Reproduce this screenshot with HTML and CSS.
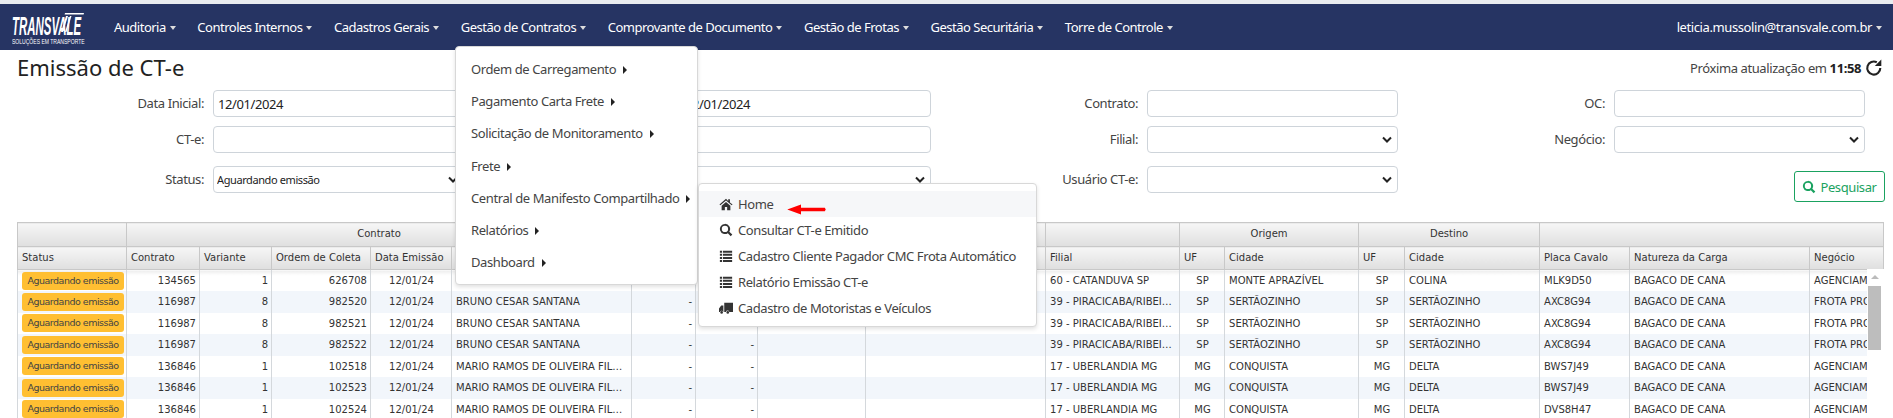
FILE: index.html
```html
<!DOCTYPE html>
<html lang="pt-BR">
<head>
	<meta charset="UTF-8">
	<title>Emissão de CT-e</title>
	<link rel="stylesheet" href="styles.css">
</head>
<body>
	<div id="navbar">
		<div id="logo">
			<div class="logo-name">TRANSVALE</div>
			<div class="logo-sub">SOLUÇÕES EM TRANSPORTE</div>
			<svg id="logo-road" viewBox="0 0 26 22"><path d="M7 1h19l-.4 1.500H6.600zM8 4l2 0-5 16-2 0zM12 4l1.500 0-5 16-1.500 0z" fill="#fff"/></svg>
		</div>
		<ul id="nav">
			<li>Auditoria<i class="caret"></i></li>
			<li>Controles Internos<i class="caret"></i></li>
			<li>Cadastros Gerais<i class="caret"></i></li>
			<li>Gestão de Contratos<i class="caret"></i></li>
			<li>Comprovante de Documento<i class="caret"></i></li>
			<li>Gestão de Frotas<i class="caret"></i></li>
			<li>Gestão Securitária<i class="caret"></i></li>
			<li>Torre de Controle<i class="caret"></i></li>
		</ul>
		<div id="user">leticia.mussolin@transvale.com.br<i class="caret"></i></div>
	</div>

	<div id="menu">
		<div class="menu-item">Ordem de Carregamento<i class="arrow-right"></i></div>
		<div class="menu-item">Pagamento Carta Frete<i class="arrow-right"></i></div>
		<div class="menu-item">Solicitação de Monitoramento<i class="arrow-right"></i></div>
		<div class="menu-item">Frete<i class="arrow-right"></i></div>
		<div class="menu-item">Central de Manifesto Compartilhado<i class="arrow-right"></i></div>
		<div class="menu-item">Relatórios<i class="arrow-right"></i></div>
		<div class="menu-item">Dashboard<i class="arrow-right"></i></div>
	</div>

	<div id="submenu">
		<div class="sub-item selected">
			<svg class="ico" viewBox="0 0 16 16"><path d="M8 2 0.500 8.500l1 1L8 4l6.500 5.500 1-1L12.500 6.300V2.500h-2v2.100zM3 10v5h3.700v-3.500h2.600V15H13v-5L8 5.800z"/></svg>
			Home
			<svg id="red-arrow" viewBox="0 0 44 12"><path d="M1 6 16 0.500V4h26q2 2 0 4H16v3.500z"/></svg>
		</div>
		<div class="sub-item">
			<svg class="ico" viewBox="0 0 16 16"><path d="M6.800 1a5.800 5.800 0 1 0 3.300 10.600l3.300 3.400 1.800-1.800-3.400-3.300A5.800 5.800 0 0 0 6.800 1zm0 2.200a3.600 3.600 0 1 1 0 7.200 3.600 3.600 0 0 1 0-7.200z"/></svg>
			Consultar CT-e Emitido
		</div>
		<div class="sub-item">
			<svg class="ico" viewBox="0 0 16 16"><path d="M1 2h2.500v2.300H1zM4.500 2H15v2.300H4.500zM1 5.500h2.500v2.300H1zM4.500 5.500H15v2.300H4.500zM1 9h2.500v2.300H1zM4.500 9H15v2.300H4.500zM1 12.500h2.500v2.300H1zM4.500 12.500H15v2.300H4.500z"/></svg>
			Cadastro Cliente Pagador CMC Frota Automático
		</div>
		<div class="sub-item">
			<svg class="ico" viewBox="0 0 16 16"><path d="M1 2h2.500v2.300H1zM4.500 2H15v2.300H4.500zM1 5.500h2.500v2.300H1zM4.500 5.500H15v2.300H4.500zM1 9h2.500v2.300H1zM4.500 9H15v2.300H4.500zM1 12.500h2.500v2.300H1zM4.500 12.500H15v2.300H4.500z"/></svg>
			Relatório Emissão CT-e
		</div>
		<div class="sub-item">
			<svg class="ico" viewBox="0 0 16 16"><path d="M6 2h10v10.500h-4.200a2 2 0 0 0-3.900 0H6zM5 5v7.500H4.800a2 2 0 0 0-3.700 0H0V8.500L2.500 5z"/><circle cx="3" cy="13" r="1.500"/><circle cx="10" cy="13" r="1.500"/></svg>
			Cadastro de Motoristas e Veículos
		</div>
	</div>

	<div id="title-row">
		<h1>Emissão de CT-e</h1>
		<div id="refresh">
			<span>Próxima atualização em <b>11:58</b></span>
			<svg viewBox="0 0 16 16"><path d="M13.600 8A5.800 5.800 0 1 1 10.500 2.900" fill="none" stroke="#222" stroke-width="1.900"/><path d="M14.500 0.500v5.800H8.700z" fill="#222"/></svg>
		</div>
	</div>

	<div id="filters">
		<div class="field row-one"><label>Data Inicial:</label><input class="date" type="text" value="12/01/2024"></div>
		<div class="field row-one"><label>Data Final:</label><input class="date" type="text" value="12/01/2024"></div>
		<div class="field"><label>Contrato:</label><input type="text"></div>
		<div class="field"><label>OC:</label><input type="text"></div>

		<div class="field"><label>CT-e:</label><input type="text"></div>
		<div class="field"><label>Motorista:</label><input type="text"></div>
		<div class="field"><label>Filial:</label><select></select></div>
		<div class="field"><label>Negócio:</label><select></select></div>

		<div class="field"><label>Status:</label><select class="small"><option>Aguardando emissão</option></select></div>
		<div class="field"><label>Tipo:</label><select></select></div>
		<div class="field"><label>Usuário CT-e:</label><select></select></div>
		<div class="field field-btn">
			<button id="search">
				<svg viewBox="0 0 16 16"><path d="M6.800 1a5.800 5.800 0 1 0 3.300 10.600l3.300 3.400 1.800-1.800-3.400-3.300A5.800 5.800 0 0 0 6.800 1zm0 2.200a3.600 3.600 0 1 1 0 7.200 3.600 3.600 0 0 1 0-7.200z"/></svg>
				Pesquisar
			</button>
		</div>
	</div>

	<div id="grid">
		<table>
			<colgroup>
				<col class="c109"><col class="c73"><col class="c72"><col class="c99"><col class="c81"><col class="c180"><col class="c64"><col class="c62"><col class="c108"><col class="c180"><col class="c134"><col class="c45"><col class="c134"><col class="c46"><col class="c135"><col class="c90"><col class="c180"><col class="c74">
			</colgroup>
			<thead>
				<tr class="group">
					<th></th>
					<th colspan="5">Contrato</th>
					<th colspan="4"></th>
					<th></th>
					<th colspan="2">Origem</th>
					<th colspan="2">Destino</th>
					<th colspan="3"></th>
				</tr>
				<tr class="cols">
					<th>Status</th><th>Contrato</th><th>Variante</th><th>Ordem de Coleta</th><th>Data Emissão</th><th>Motorista</th><th></th><th>Série</th><th></th><th></th><th>Filial</th><th>UF</th><th>Cidade</th><th>UF</th><th>Cidade</th><th>Placa Cavalo</th><th>Natureza da Carga</th><th>Negócio</th>
				</tr>
			</thead>
			<tbody>
				<tr>
					<td><span class="badge">Aguardando emissão</span></td><td class="r">134565</td><td class="r">1</td><td class="r">626708</td><td class="c">12/01/24</td><td class="name"></td><td class="r">-</td><td class="r">-</td><td></td><td></td><td>60 - CATANDUVA SP</td><td class="c">SP</td><td>MONTE APRAZÍVEL</td><td class="c">SP</td><td>COLINA</td><td>MLK9D50</td><td>BAGACO DE CANA</td><td class="clip">AGENCIAMENTO</td>
				</tr>
				<tr class="odd">
					<td><span class="badge">Aguardando emissão</span></td><td class="r">116987</td><td class="r">8</td><td class="r">982520</td><td class="c">12/01/24</td><td class="name">BRUNO CESAR SANTANA</td><td class="r">-</td><td class="r">-</td><td></td><td></td><td>39 - PIRACICABA/RIBEIRÃO PRETO</td><td class="c">SP</td><td>SERTÃOZINHO</td><td class="c">SP</td><td>SERTÃOZINHO</td><td>AXC8G94</td><td>BAGACO DE CANA</td><td class="clip">FROTA PROPRIA</td>
				</tr>
				<tr>
					<td><span class="badge">Aguardando emissão</span></td><td class="r">116987</td><td class="r">8</td><td class="r">982521</td><td class="c">12/01/24</td><td class="name">BRUNO CESAR SANTANA</td><td class="r">-</td><td class="r">-</td><td></td><td></td><td>39 - PIRACICABA/RIBEIRÃO PRETO</td><td class="c">SP</td><td>SERTÃOZINHO</td><td class="c">SP</td><td>SERTÃOZINHO</td><td>AXC8G94</td><td>BAGACO DE CANA</td><td class="clip">FROTA PROPRIA</td>
				</tr>
				<tr class="odd">
					<td><span class="badge">Aguardando emissão</span></td><td class="r">116987</td><td class="r">8</td><td class="r">982522</td><td class="c">12/01/24</td><td class="name">BRUNO CESAR SANTANA</td><td class="r">-</td><td class="r">-</td><td></td><td></td><td>39 - PIRACICABA/RIBEIRÃO PRETO</td><td class="c">SP</td><td>SERTÃOZINHO</td><td class="c">SP</td><td>SERTÃOZINHO</td><td>AXC8G94</td><td>BAGACO DE CANA</td><td class="clip">FROTA PROPRIA</td>
				</tr>
				<tr>
					<td><span class="badge">Aguardando emissão</span></td><td class="r">136846</td><td class="r">1</td><td class="r">102518</td><td class="c">12/01/24</td><td class="name">MARIO RAMOS DE OLIVEIRA FILHO</td><td class="r">-</td><td class="r">-</td><td></td><td></td><td>17 - UBERLANDIA MG</td><td class="c">MG</td><td>CONQUISTA</td><td class="c">MG</td><td>DELTA</td><td>BWS7J49</td><td>BAGACO DE CANA</td><td class="clip">AGENCIAMENTO</td>
				</tr>
				<tr class="odd">
					<td><span class="badge">Aguardando emissão</span></td><td class="r">136846</td><td class="r">1</td><td class="r">102523</td><td class="c">12/01/24</td><td class="name">MARIO RAMOS DE OLIVEIRA FILHO</td><td class="r">-</td><td class="r">-</td><td></td><td></td><td>17 - UBERLANDIA MG</td><td class="c">MG</td><td>CONQUISTA</td><td class="c">MG</td><td>DELTA</td><td>BWS7J49</td><td>BAGACO DE CANA</td><td class="clip">AGENCIAMENTO</td>
				</tr>
				<tr>
					<td><span class="badge">Aguardando emissão</span></td><td class="r">136846</td><td class="r">1</td><td class="r">102524</td><td class="c">12/01/24</td><td class="name">MARIO RAMOS DE OLIVEIRA FILHO</td><td class="r">-</td><td class="r">-</td><td></td><td></td><td>17 - UBERLANDIA MG</td><td class="c">MG</td><td>CONQUISTA</td><td class="c">MG</td><td>DELTA</td><td>DVS8H47</td><td>BAGACO DE CANA</td><td class="clip">AGENCIAMENTO</td>
				</tr>
			</tbody>
		</table>
		<div id="scrollbar">
			<div id="scroll-up"></div>
			<div id="scroll-thumb"></div>
		</div>
	</div>
</body>
</html>
```

FILE: styles.css
```css
*{
	margin: 0;
	padding: 0;
	box-sizing: border-box;
}
html, body{
	height: 418px;
	overflow: hidden;
}
body{
	background: #fff;
	color: #333;
	font-family: "Noto Sans", "Open Sans", sans-serif;
	font-size: 13px;
	letter-spacing: -0.4px;
	position: relative;
}
ul{
	list-style: none;
}

/* barra do topo */
#navbar{
	margin-top: 4px;
	height: 46px;
	background: #263463;
	color: #fff;
	display: flex;
	align-items: center;
	box-shadow: 0 -4px 0 #e9ecef;
}
#logo{
	width: 114px;
	height: 46px;
	padding: 9px 0 0 12px;
	flex: none;
	line-height: 1;
	overflow: hidden;
	position: relative;
}
.logo-name{
	font-family: "Liberation Sans", sans-serif;
	font-weight: bold;
	font-style: italic;
	font-size: 26px;
	letter-spacing: 0;
	white-space: nowrap;
	transform: scaleX(.44);
	transform-origin: left top;
}
.logo-sub{
	font-family: "Liberation Sans", sans-serif;
	font-size: 7px;
	letter-spacing: 0;
	white-space: nowrap;
	margin-top: -1px;
	transform: scaleX(.72);
	transform-origin: left top;
}
#logo-road{
	position: absolute;
	left: 58px;
	top: 8px;
	width: 26px;
	height: 22px;
}
#nav{
	display: flex;
	gap: 21.600px;
	flex: 1;
	letter-spacing: -0.5px;
}
.caret{
	display: inline-block;
	margin-left: 4px;
	vertical-align: 2px;
	border-top: 4px solid #ddd;
	border-left: 3.500px solid transparent;
	border-right: 3.500px solid transparent;
}
#user{
	padding-right: 11px;
}

/* menu aberto */
#menu{
	position: absolute;
	left: 455px;
	top: 46px;
	width: 243px;
	height: 239px;
	padding-top: 7px;
	background: #fff;
	border: 1px solid #d8d8d8;
	border-radius: 4px;
	box-shadow: 0 2px 4px rgba(0,0,0,.12);
	z-index: 10;
}
.menu-item{
	height: 32.200px;
	line-height: 31px;
	padding-left: 15px;
	white-space: nowrap;
	color: #444;
}
.arrow-right{
	display: inline-block;
	margin-left: 7px;
	border-left: 4px solid #222;
	border-top: 4px solid transparent;
	border-bottom: 4px solid transparent;
}
#submenu{
	position: absolute;
	left: 698px;
	top: 183px;
	width: 339px;
	height: 144px;
	padding-top: 7px;
	background: #fff;
	border: 1px solid #d8d8d8;
	border-radius: 4px;
	box-shadow: 0 2px 4px rgba(0,0,0,.12);
	z-index: 11;
}
.sub-item{
	height: 26px;
	line-height: 26px;
	padding-left: 20px;
	display: flex;
	align-items: center;
	white-space: nowrap;
	color: #444;
	position: relative;
}
.sub-item.selected{
	background: #f6f7f9;
}
.ico{
	width: 14px;
	height: 14px;
	margin-right: 5px;
	fill: #333;
	flex: none;
}
#red-arrow{
	position: absolute;
	left: 86px;
	top: 13px;
	width: 43px;
	height: 11px;
	fill: #f00;
}

/* titulo */
#title-row{
	height: 40px;
	display: flex;
	justify-content: space-between;
	padding: 0 10px 0 17px;
}
h1{
	font-size: 22px;
	font-weight: normal;
	line-height: 34px;
	letter-spacing: 0;
	color: #222;
}
#refresh{
	display: flex;
	align-items: center;
	height: 36px;
	gap: 4px;
	color: #444;
}
#refresh b{
	color: #222;
}
#refresh svg{
	width: 18px;
	height: 18px;
}

/* filtros */
#filters{
	display: grid;
	grid-template-columns: repeat(4, 456px);
	column-gap: 11px;
	row-gap: 9px;
	margin-left: 8px;
}
.field{
	display: flex;
	align-items: flex-start;
	height: 27px;
}
.field:nth-child(n+9){
	margin-top: 4px;
}
.field label{
	width: 197px;
	padding-right: 1px;
	text-align: right;
	line-height: 27px;
	color: #444;
	flex: none;
}
.field input, .field select{
	width: 251px;
	height: 27px;
	margin-left: 8px;
	border: 1px solid #ced4da;
	border-radius: 4px;
	background-color: #fff;
	font-family: inherit;
	font-size: 13px;
	letter-spacing: -0.4px;
	color: #222;
	padding: 0 4px;
	appearance: none;
}
.field select{
	background-image: url("data:image/svg+xml,%3Csvg xmlns='http://www.w3.org/2000/svg' viewBox='0 0 10 7'%3E%3Cpath d='M1 1.500l4 4 4-4' fill='none' stroke='%23222' stroke-width='2'/%3E%3C/svg%3E");
	background-repeat: no-repeat;
	background-position: right 5px center;
	background-size: 10px 7px;
}
.field select.small{
	font-size: 11px;
	padding: 0 3px;
}
.field-btn{
	justify-content: flex-end;
	padding-right: 0;
	margin-right: -20px;
}
#search{
	width: 91px;
	height: 31px;
	margin-top: 5px;
	background: #fff;
	border: 1px solid #1aa260;
	border-radius: 3px;
	color: #1aa260;
	font-family: inherit;
	font-size: 13px;
	letter-spacing: -0.4px;
	display: flex;
	align-items: center;
	justify-content: center;
	gap: 4px;
}
#search svg{
	width: 14px;
	height: 14px;
	fill: #1aa260;
}

/* tabela */
#grid{
	position: relative;
	margin: 29px 0 0 17px;
	width: 1867px;
	font-family: "DejaVu Sans", sans-serif;
	font-size: 10px;
	letter-spacing: 0;
	color: #333;
}
table{
	width: 1867px;
	table-layout: fixed;
	border-collapse: collapse;
	border: 1px solid #c8c8c8;
}
.c109{ width: 109px; }
.c73{ width: 73px; }
.c72{ width: 72px; }
.c99{ width: 99px; }
.c81{ width: 81px; }
.c180{ width: 180px; }
.c64{ width: 64px; }
.c62{ width: 62px; }
.c108{ width: 108px; }
.c134{ width: 134px; }
.c45{ width: 45px; }
.c46{ width: 46px; }
.c135{ width: 135px; }
.c90{ width: 90px; }
.c74{ width: 74px; }
th{
	font-weight: normal;
	background: linear-gradient(#f6f6f6, #dfdfdf);
	border: 1px solid #c8c8c8;
	color: #333;
	overflow: hidden;
	white-space: nowrap;
	padding-bottom: 2px;
}
.group th{
	height: 24px;
	text-align: center;
}
.cols th{
	height: 23px;
	text-align: left;
	padding-left: 4px;
}
td{
	height: 21.500px;
	padding: 0 3px 0 4px;
	border-left: 1px solid #d4d8dc;
	border-right: 1px solid #d4d8dc;
	overflow: hidden;
	white-space: nowrap;
	text-overflow: ellipsis;
}
tbody tr:first-child td{
	background: linear-gradient(#ededed, #fff 5px);
}
td.name{
	padding-right: 8px;
}
.odd td{
	background: #f2f6fb;
}
td.r{
	text-align: right;
}
td.c{
	text-align: center;
}
td.clip{
	text-overflow: clip;
}
td:first-child{
	padding: 0 2px 0 4px;
}
.badge{
	display: block;
	height: 18px;
	line-height: 18px;
	background: #ffbf32;
	border-radius: 3px;
	color: #444;
	font-size: 9.500px;
	letter-spacing: -0.5px;
	text-align: center;
}
#scrollbar{
	position: absolute;
	right: 0;
	top: 47px;
	width: 17px;
	height: 150px;
	background: #fff;
}
#scroll-up{
	position: absolute;
	left: 4px;
	top: 6px;
	border-bottom: 4px solid #bbb;
	border-left: 4px solid transparent;
	border-right: 4px solid transparent;
}
#scroll-thumb{
	position: absolute;
	left: 1px;
	top: 17px;
	width: 13px;
	height: 64px;
	background: #bdbdbd;
}
```
